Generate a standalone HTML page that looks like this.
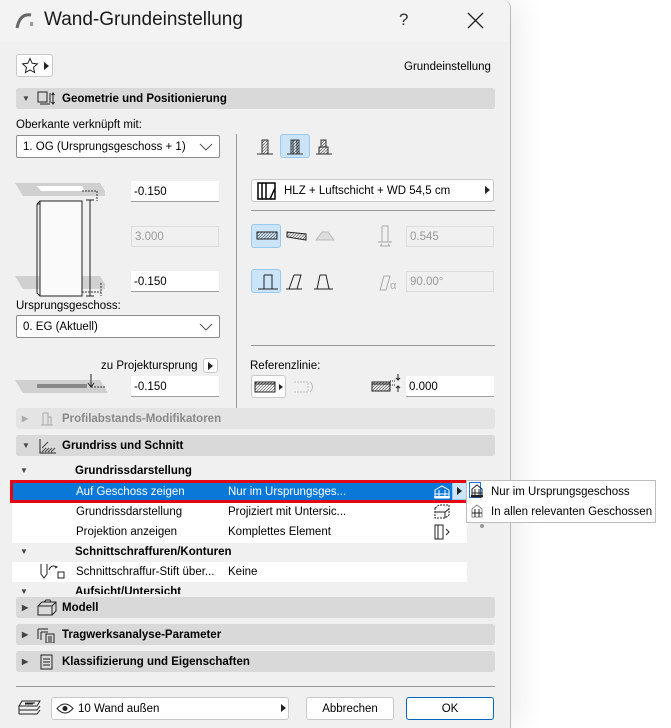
<!DOCTYPE html>
<html><head><meta charset="utf-8">
<style>
*{box-sizing:border-box;margin:0;padding:0}
body{width:671px;height:728px;background:#fff;font-family:"Liberation Sans",sans-serif;font-size:11px;color:#000;position:relative;overflow:hidden}
.dlg{position:absolute;left:0;top:0;width:511px;height:728px;background:#f0f0f0;border-right:1px solid #b8b8b8;border-radius:0 8px 0 0;box-shadow:8px 0 30px rgba(0,0,0,0.08)}
.title{position:absolute;left:0;top:0;width:510px;height:42px;background:#f3f3f3;border-radius:0 8px 0 0}
.a{position:absolute}
.bar{position:absolute;left:16px;width:479px;height:21px;background:#d9d9d9;border-radius:3px;font-weight:bold;font-size:11.5px;line-height:23px}
.bar .tri{position:absolute;left:6px;top:0;font-size:8px;color:#444;line-height:21px}
.bar .t{position:absolute;left:46px;top:0}
.inp{position:absolute;background:#fff;border-bottom:1px solid #a0a0a0;height:21px;line-height:22px;padding-left:3px;font-size:11.5px}
.inpd{position:absolute;background:#f0f0f0;border:1px solid #dcdcdc;height:21px;line-height:21px;padding-left:3px;font-size:11.5px;color:#999}
.sel{position:absolute;background:#fff;border:1px solid #8c8c8c;border-radius:2px;height:23px;line-height:23px;padding-left:6px;font-size:11.5px}
.btn{position:absolute;background:#fff;border:1px solid #c8c8c8;border-radius:3px;height:23px;line-height:23px;font-size:11.5px;text-align:center}
.ib{position:absolute;width:30px;height:24px}
.ib.on{background:#cce4f7;border:1px solid #99c9ef;border-radius:3px}
.lt{position:absolute;font-size:11.5px;line-height:20px}
</style></head><body>
<div class="dlg">
<div class="title"></div>
<svg class="a" style="left:14px;top:10px" width="22" height="20"><path d="M3 18 Q6 3 17 5" stroke="#666" stroke-width="3" fill="none"/><rect x="16" y="12" width="3" height="4" fill="#999"/></svg>
<div class="a" style="left:44px;top:9px;font-size:19px;color:#1a1a1a">Wand-Grundeinstellung</div>
<div class="a" style="left:399px;top:10px;font-size:17px;color:#333">?</div>
<svg class="a" style="left:467px;top:12px" width="17" height="17"><path d="M1 1L16 16M16 1L1 16" stroke="#222" stroke-width="1.3"/></svg>

<div class="btn" style="left:16px;top:54px;width:37px;height:23px"></div>
<svg class="a" style="left:21px;top:57px" width="18" height="17"><path d="M9 1.5l2.2 4.8 5.2.6-3.9 3.5 1.1 5.1L9 12.9l-4.6 2.6 1.1-5.1L1.6 6.9l5.2-.6z" stroke="#222" fill="none"/></svg>
<svg class="a" style="left:44px;top:62px" width="6" height="8"><path d="M0 0l5 4l-5 4z" fill="#222"/></svg>
<div class="a" style="left:404px;top:61px;font-size:11.5px">Grundeinstellung</div>

<div class="bar" style="top:88px"><span class="tri">▼</span>
<svg class="a" style="left:20px;top:3px" width="20" height="16"><rect x="2" y="1" width="9" height="10" fill="none" stroke="#222"/><path d="M4 13h10M14 2v10" stroke="#222"/><path d="M17 2v11M15.5 4L17 2L18.5 4M15.5 11L17 13L18.5 11" stroke="#222" fill="none"/></svg>
<span class="t">Geometrie und Positionierung</span></div>

<div class="a" style="left:16px;top:119px;font-size:11.5px">Oberkante verknüpft mit:</div>
<div class="sel" style="left:16px;top:135px;width:204px">1. OG (Ursprungsgeschoss + 1)</div>
<svg class="a" style="left:199px;top:143px" width="14" height="8"><path d="M1 1l6 6l6-6" stroke="#555" fill="none"/></svg>
<div class="a" style="left:236px;top:134px;width:1px;height:280px;background:#999"></div>

<svg class="a" style="left:15px;top:180px" width="90" height="120">
<polygon points="0,3 85,3 93,16 8,16" fill="#d0d0d0"/>
<polygon points="22,6 67,6 70,11 26,11" fill="#fff"/>
<polygon points="0,96 85,96 93,109 8,109" fill="#d0d0d0"/>
<rect x="25" y="21" width="42" height="95" fill="#fafafa" stroke="#222"/>
<path d="M22 24 L25 21 M22 24 V113 L25 116 M22 24 H25" stroke="#222" fill="none"/>
<path d="M75 20V116 M71 20h8 M71 116h8" stroke="#222"/>
<path d="M67 11h15M82 11v10M67 112h19M86 103v13" stroke="#333" stroke-dasharray="2,1"/>
</svg>
<div class="inp" style="left:131px;top:181px;width:88px">-0.150</div>
<div class="inpd" style="left:131px;top:226px;width:88px">3.000</div>
<div class="inp" style="left:131px;top:271px;width:88px">-0.150</div>

<div class="a" style="left:16px;top:300px;font-size:11.5px">Ursprungsgeschoss:</div>
<div class="sel" style="left:16px;top:315px;width:204px">0. EG (Aktuell)</div>
<svg class="a" style="left:199px;top:323px" width="14" height="8"><path d="M1 1l6 6l6-6" stroke="#555" fill="none"/></svg>
<div class="a" style="left:101px;top:360px;font-size:11.5px">zu Projektursprung</div>
<div class="btn" style="left:203px;top:358px;width:15px;height:15px"></div>
<svg class="a" style="left:208px;top:362px" width="6" height="8"><path d="M0 0l5 4l-5 4z" fill="#222"/></svg>
<svg class="a" style="left:15px;top:372px" width="95" height="25"><polygon points="0,8 85,8 93,21 8,21" fill="#d0d0d0"/><rect x="22" y="12" width="50" height="4" fill="#888"/><path d="M76 2v12M73 11l3 4l3-4" stroke="#222" fill="none"/><path d="M76 15h14" stroke="#333" stroke-dasharray="2,1"/></svg>
<div class="inp" style="left:131px;top:376px;width:88px">-0.150</div>

<div class="ib on" style="left:280px;top:134px"></div>
<svg class="a" style="left:253px;top:137px" width="110" height="22">
<defs><pattern id="h" width="3" height="3" patternUnits="userSpaceOnUse"><path d="M0 3L3 0" stroke="#555" stroke-width="0.7"/></pattern></defs>
<g stroke="#333"><rect x="9" y="3" width="6" height="14" fill="url(#h)"/><path d="M4 17h16"/>
<rect x="38" y="3" width="8" height="14" fill="url(#h)"/><path d="M40 3v14M44 3v14M34 17h16"/>
<rect x="68" y="3" width="5" height="7" fill="url(#h)"/><rect x="66" y="10" width="9" height="7" fill="url(#h)"/><path d="M63 17h16"/></g></svg>

<div class="btn" style="left:251px;top:179px;width:243px;height:23px;text-align:left;padding-left:32px">HLZ + Luftschicht + WD 54,5 cm</div>
<svg class="a" style="left:485px;top:186px" width="6" height="8"><path d="M0 0l5 4l-5 4z" fill="#222"/></svg>
<svg class="a" style="left:257px;top:182px" width="20" height="18"><rect x="1" y="1" width="17" height="16" fill="#fff" stroke="#000" stroke-width="1.5"/><path d="M5 1v16M9 1v16M13 17L18 6" stroke="#000" stroke-width="1.5"/></svg>
<div class="a" style="left:251px;top:210px;width:244px;height:1px;background:#999"></div>

<div class="ib on" style="left:251px;top:224px"></div>
<svg class="a" style="left:254px;top:228px" width="90" height="16"><rect x="3" y="4" width="20" height="7" fill="url(#h)" stroke="#222"/><polygon points="33,4 52,6 52,12 33,9" fill="url(#h)" stroke="#222"/><polygon points="62,12 68,4 74,4 80,12" fill="#ddd" stroke="#bbb"/></svg>
<svg class="a" style="left:375px;top:224px" width="26" height="26"><path d="M7 2h6v16M7 2v16M3 18h14" stroke="#aaa" fill="none"/><path d="M5 22h10M5 22l2-2M15 22l-2-2" stroke="#aaa" fill="none"/></svg>
<div class="inpd" style="left:406px;top:226px;width:88px">0.545</div>

<div class="ib on" style="left:251px;top:269px"></div>
<svg class="a" style="left:254px;top:272px" width="90" height="20"><path d="M10 3h8v14M10 3v14M4 17h20" stroke="#222" fill="none"/><path d="M40 3h7l-4 14M40 3l-5 14M32 17h16" stroke="#222" fill="none"/><path d="M66 3h6l3 14M66 3l-3 14M60 17h19" stroke="#222" fill="none"/></svg>
<svg class="a" style="left:374px;top:270px" width="30" height="26"><path d="M6 20l4-14h6l-4 14z" stroke="#aaa" fill="none"/><text x="16" y="19" font-size="11" fill="#aaa" font-family="Liberation Sans">α</text></svg>
<div class="inpd" style="left:406px;top:271px;width:88px">90.00°</div>

<div class="a" style="left:251px;top:345px;width:244px;height:1px;background:#999"></div>
<div class="a" style="left:250px;top:360px;font-size:11.5px">Referenzlinie:</div>
<div class="btn" style="left:251px;top:375px;width:35px;height:23px"></div>
<svg class="a" style="left:254px;top:379px" width="30" height="16"><rect x="1" y="3" width="20" height="10" fill="url(#h)" stroke="#222"/><path d="M1 5h20" stroke="#222"/><path d="M25 5l4 3l-4 3z" fill="#222"/></svg>
<svg class="a" style="left:292px;top:377px" width="26" height="20"><path d="M2 5h14v10H2" stroke="#bbb" fill="none" stroke-dasharray="2,1"/><path d="M18 5q5 5 0 10" stroke="#bbb" fill="none"/></svg>
<svg class="a" style="left:370px;top:372px" width="32" height="24"><rect x="2" y="10" width="18" height="9" fill="url(#h)" stroke="#222"/><path d="M2 12h18" stroke="#222"/><path d="M20 9h6M20 13h6" stroke="#222" stroke-dasharray="1,1"/><path d="M28 2v6M26 6l2 2l2-2M28 20v-6M26 16l2-2l2 2" stroke="#222" fill="none"/></svg>
<div class="inp" style="left:406px;top:376px;width:88px">0.000</div>

<div class="bar" style="top:408px;background:#e4e4e4;color:#888"><span class="tri" style="color:#aaa">▶</span>
<svg class="a" style="left:22px;top:3px" width="18" height="16"><path d="M5 2h5v12M5 2v12M3 14h12M10 6h3v8" stroke="#aaa" fill="none"/></svg>
<span class="t">Profilabstands-Modifikatoren</span></div>

<div class="bar" style="top:435px"><span class="tri">▼</span>
<svg class="a" style="left:22px;top:3px" width="20" height="16"><path d="M2 1v14h16" stroke="#222" fill="none"/><path d="M4 14l4-4M7 14l4-4M10 14l4-4M13 14l4-4M4 10l6-6" stroke="#444"/></svg>
<span class="t">Grundriss und Schnitt</span></div>

<div class="a" style="left:12px;top:460px;width:455px;height:134px;background:#f0f0f0;overflow:hidden">
<div class="a" style="left:8px;top:6px;font-size:8px;color:#444">▼</div>
<div class="lt" style="left:63px;top:1px;font-weight:bold">Grundrissdarstellung</div>
<div class="a" style="left:0;top:21px;width:455px;height:22px;background:#0a78d7;color:#fff;font-size:11.5px;line-height:22px"><span class="a" style="left:64px">Auf Geschoss zeigen</span><span class="a" style="left:216px">Nur im Ursprungsges...</span></div>
<div class="a" style="left:0;top:43px;width:455px;height:40px;background:#fff"></div>
<div class="lt" style="left:64px;top:42px">Grundrissdarstellung</div>
<div class="lt" style="left:216px;top:42px">Projiziert mit Untersic...</div>
<div class="lt" style="left:64px;top:62px">Projektion anzeigen</div>
<div class="lt" style="left:216px;top:62px">Komplettes Element</div>
<div class="a" style="left:8px;top:87px;font-size:8px;color:#444">▼</div>
<div class="lt" style="left:63px;top:82px;font-weight:bold">Schnittschraffuren/Konturen</div>
<div class="a" style="left:0;top:102px;width:455px;height:20px;background:#fff"></div>
<div class="lt" style="left:64px;top:102px">Schnittschraffur-Stift über...</div>
<div class="lt" style="left:216px;top:102px">Keine</div>
<div class="a" style="left:8px;top:127px;font-size:8px;color:#444">▼</div>
<div class="lt" style="left:63px;top:122px;font-weight:bold">Aufsicht/Untersicht</div>
</div>
<svg class="a" style="left:432px;top:484px" width="20" height="16"><path d="M3 6l7-4l7 4v8H3z" stroke="#fff" fill="none"/><path d="M3 10h14M7 6v8M13 6v8" stroke="#fff"/><path d="M2 13h16" stroke="#fff" stroke-width="2"/></svg>
<svg class="a" style="left:432px;top:503px" width="20" height="18"><path d="M3 5l4-3h10v10l-4 3H3z" stroke="#222" fill="none" stroke-dasharray="2,1"/><path d="M3 9h10v6M13 9l4-3" stroke="#222" fill="none"/></svg>
<svg class="a" style="left:432px;top:523px" width="20" height="18"><path d="M3 2h8v14H3zM6 2v14" stroke="#222" fill="none"/><path d="M14 6l3 3l-3 3" stroke="#222" fill="none"/></svg>
<svg class="a" style="left:38px;top:562px" width="30" height="20"><path d="M3 2v10l3 4l3-4V2" stroke="#222" fill="none"/><path d="M11 8q2-6 8-3l-2 1" stroke="#222" fill="none"/><rect x="20" y="10" width="6" height="6" stroke="#222" fill="none"/></svg>
<div class="a" style="left:452px;top:482px;width:16px;height:18px;background:#cce4f7;border:1px solid #99c9ef"></div>
<svg class="a" style="left:457px;top:487px" width="6" height="8"><path d="M0 0l5 4l-5 4z" fill="#222"/></svg>
<div class="a" style="left:10px;top:480px;width:460px;height:23px;border:3px solid #e30613"></div>

<div class="bar" style="top:597px"><span class="tri">▶</span>
<svg class="a" style="left:20px;top:2px" width="22" height="18"><path d="M2 7h14v9H2zM2 7l4-4h14v9l-4 4M16 7l4-4" stroke="#222" fill="none"/><path d="M8 3l2-2h4l1 2" stroke="#222" fill="none"/></svg>
<span class="t">Modell</span></div>
<div class="bar" style="top:624px"><span class="tri">▶</span>
<svg class="a" style="left:20px;top:3px" width="22" height="16"><path d="M2 2h10M2 2v10M5 5h7M5 5v8" stroke="#222" fill="none"/><rect x="10" y="7" width="8" height="9" stroke="#222" fill="none"/><path d="M12 10h4M12 12h4M12 14h4" stroke="#222"/></svg>
<span class="t">Tragwerksanalyse-Parameter</span></div>
<div class="bar" style="top:651px"><span class="tri">▶</span>
<svg class="a" style="left:22px;top:3px" width="18" height="16"><rect x="3" y="1" width="11" height="14" stroke="#222" fill="none"/><path d="M5 5h7M5 8h7M5 11h7" stroke="#222"/></svg>
<span class="t">Klassifizierung und Eigenschaften</span></div>

<div class="a" style="left:16px;top:686px;width:479px;height:1px;background:#999"></div>
<svg class="a" style="left:16px;top:698px" width="28" height="22"><path d="M3 8h18l3-5H6zM3 12h18l3-4M3 16h18l3-4M3 8v8" stroke="#222" fill="none"/><path d="M9 5h10M9 6h8" stroke="#222"/></svg>
<div class="btn" style="left:51px;top:697px;width:238px;height:23px;text-align:left;padding-left:26px">10 Wand außen</div>
<svg class="a" style="left:281px;top:704px" width="6" height="8"><path d="M0 0l5 4l-5 4z" fill="#222"/></svg>
<svg class="a" style="left:56px;top:702px" width="18" height="13"><path d="M1 6.5q8-9 16 0q-8 9-16 0z" stroke="#222" fill="none"/><circle cx="9" cy="6.5" r="2.5" fill="#222"/></svg>
<div class="btn" style="left:306px;top:697px;width:88px;height:23px">Abbrechen</div>
<div class="btn" style="left:406px;top:697px;width:88px;height:23px;border:1px solid #0067c0">OK</div>
</div>
<div class="a" style="left:466px;top:480px;width:190px;height:43px;background:#fff;border:1px solid #bdbdbd"></div>
<div class="a" style="left:469px;top:482px;width:12px;height:16px;border:1px solid #1a73d9"></div>
<svg class="a" style="left:470px;top:483px" width="14" height="16"><path d="M2 6l5-4l5 4v8H2z" stroke="#222" fill="none"/><path d="M2 10h10M5 6v8M9 6v8" stroke="#222"/><path d="M1 13h12" stroke="#222" stroke-width="2"/></svg>
<svg class="a" style="left:470px;top:503px" width="14" height="16"><path d="M2 6l5-4l5 4v8H2z" stroke="#888" fill="none"/><path d="M2 10h10M5 6v8M9 6v8" stroke="#222"/></svg>
<div class="a" style="left:491px;top:486px;font-size:11.5px">Nur im Ursprungsgeschoss</div>
<div class="a" style="left:491px;top:506px;font-size:11.5px">In allen relevanten Geschossen</div>
<div class="a" style="left:480px;top:524px;width:4px;height:4px;border-radius:2px;background:#999"></div>
</body></html>
